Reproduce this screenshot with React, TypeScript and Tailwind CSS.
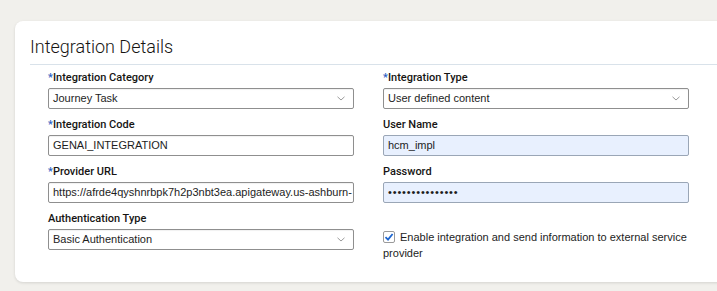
import React from "react";

const font = { fontFamily: '"Liberation Sans", Arial, sans-serif' };

function Label({ text, required }: { text: string; required?: boolean }) {
  return (
    <div className="h-[16px] leading-[16px] text-[11px] font-medium text-[#161513] [font-family:Roboto,sans-serif]">
      {required && <span className="text-[#2a5ec4]">*</span>}
      {text}
    </div>
  );
}

function Chevron() {
  return (
    <svg width="8" height="5" viewBox="0 0 8 5" className="shrink-0">
      <path d="M0.5 0.8 L4 4 L7.5 0.8" fill="none" stroke="#9b9b9b" strokeWidth="1" />
    </svg>
  );
}

function Select({ value }: { value: string }) {
  return (
    <div className="mt-[2px] h-[21px] flex items-center justify-between pl-[4px] pr-[8px] border border-[#8f8f8f] rounded-[2px] bg-white text-[11px] text-[#1d1d1d] shadow-[inset_0_1px_1px_rgba(0,0,0,0.06)]">
      <span>{value}</span>
      <Chevron />
    </div>
  );
}

function Input({ value, filled, dots }: { value: string; filled?: boolean; dots?: boolean }) {
  return (
    <div
      className={
        filled
          ? "mt-[2px] h-[21px] flex items-center pl-[4px] border border-[#9aa6b6] rounded-[2px] bg-[#e8f0fe] text-[11px] text-[#1d1d1d] overflow-hidden whitespace-nowrap"
          : "mt-[2px] h-[21px] flex items-center pl-[4px] border border-[#8f8f8f] rounded-[2px] bg-white text-[11px] text-[#1d1d1d] overflow-hidden whitespace-nowrap shadow-[inset_0_1px_1px_rgba(0,0,0,0.06)]"
      }
    >
      <span className={dots ? "tracking-[0.85px]" : ""}>{value}</span>
    </div>
  );
}

function Field({ children }: { children: React.ReactNode }) {
  return <div className="h-[47px]">{children}</div>;
}

export default function App() {
  return (
    <div className="w-[717px] h-[291px] overflow-hidden bg-[#f1f0ec] pt-[21px] pl-[15px]" style={font}>
      <div className="w-[740px] h-[261px] bg-white rounded-[8px] shadow-[0_1px_3px_rgba(0,0,0,0.12)] pl-[15px]">
        <div className="pt-[14px] pb-[5px] border-b border-[#d9e2ea]">
          <h1 className="text-[18px] leading-[24px] font-light text-[#161513] [font-family:Roboto,sans-serif]">
            Integration Details
          </h1>
        </div>
        <div className="pl-[18px] pt-[5px] grid grid-cols-[306px_306px] gap-x-[29px]">
          <div>
            <Field>
              <Label text="Integration Category" required />
              <Select value="Journey Task" />
            </Field>
            <Field>
              <Label text="Integration Code" required />
              <Input value="GENAI_INTEGRATION" />
            </Field>
            <Field>
              <Label text="Provider URL" required />
              <Input value="https://afrde4qyshnrbpk7h2p3nbt3ea.apigateway.us-ashburn-" />
            </Field>
            <Field>
              <Label text="Authentication Type" />
              <Select value="Basic Authentication" />
            </Field>
          </div>
          <div>
            <Field>
              <Label text="Integration Type" required />
              <Select value="User defined content" />
            </Field>
            <Field>
              <Label text="User Name" />
              <Input value="hcm_impl" filled />
            </Field>
            <Field>
              <Label text="Password" />
              <Input value={"\u2022".repeat(15)} filled dots />
            </Field>
            <div className="pt-[18px] text-[11px] leading-[16px] text-[#1d1d1d]">
              <span className="inline-block align-[-2px] mr-[5px] w-[12px] h-[12px] border border-[#9a9a9a] rounded-[2px] bg-white relative">
                <svg width="10" height="10" viewBox="0 0 10 10" className="absolute left-[0px] top-[0px]">
                  <path d="M1.5 5.2 L4 7.6 L8.6 2" fill="none" stroke="#1e66d0" strokeWidth="1.8" />
                </svg>
              </span>
              Enable integration and send information to external service provider
            </div>
          </div>
        </div>
      </div>
    </div>
  );
}
